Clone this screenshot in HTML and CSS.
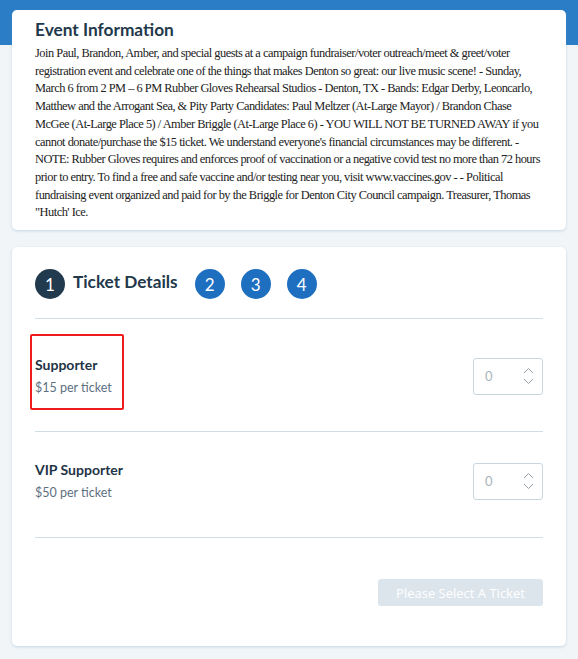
FILE: index.html
```html
<!DOCTYPE html>
<html>
<head>
<meta charset="utf-8">
<link rel="stylesheet" href="styles.css">
</head>
<body>
<div class="page">
  <section class="card info-card">
    <h2 class="card-title">Event Information</h2>
    <p class="desc">Join Paul, Brandon, Amber, and special guests at a campaign fundraiser/voter outreach/meet &amp; greet/voter registration event and celebrate one of the things that makes Denton so great: our live music scene! - Sunday, March 6 from 2 PM – 6 PM Rubber Gloves Rehearsal Studios - Denton, TX - Bands: Edgar Derby, Leoncarlo, Matthew and the Arrogant Sea, &amp; Pity Party Candidates: Paul Meltzer (At-Large Mayor) / Brandon Chase McGee (At-Large Place 5) / Amber Briggle (At-Large Place 6) - YOU WILL NOT BE TURNED AWAY if you cannot donate/purchase the $15 ticket. We understand everyone's financial circumstances may be different. - NOTE: Rubber Gloves requires and enforces proof of vaccination or a negative covid test no more than 72 hours prior to entry. To find a free and safe vaccine and/or testing near you, visit www.vaccines.gov - - Political fundraising event organized and paid for by the Briggle for Denton City Council campaign. Treasurer, Thomas "Hutch' Ice.</p>
  </section>

  <section class="card ticket-card">
    <div class="steps">
      <span class="step step-active">1</span>
      <span class="step-label">Ticket Details</span>
      <span class="step">2</span>
      <span class="step">3</span>
      <span class="step">4</span>
    </div>

    <div class="ticket-row first">
      <div class="ticket-info">
        <div class="ticket-name">Supporter</div>
        <div class="ticket-price">$15 per ticket</div>
        <span class="highlight"></span>
      </div>
      <div class="qty">
        <span class="qty-value">0</span>
        <span class="spin">
          <svg width="11" height="7" viewBox="0 0 11 7"><path d="M1 6 L5.5 1.5 L10 6" fill="none" stroke="#8a98a3" stroke-width="0.9"/></svg>
          <svg width="11" height="7" viewBox="0 0 11 7"><path d="M1 1 L5.5 5.5 L10 1" fill="none" stroke="#8a98a3" stroke-width="0.9"/></svg>
        </span>
      </div>
    </div>

    <div class="ticket-row second">
      <div class="ticket-info">
        <div class="ticket-name">VIP Supporter</div>
        <div class="ticket-price">$50 per ticket</div>
      </div>
      <div class="qty">
        <span class="qty-value">0</span>
        <span class="spin">
          <svg width="11" height="7" viewBox="0 0 11 7"><path d="M1 6 L5.5 1.5 L10 6" fill="none" stroke="#8a98a3" stroke-width="0.9"/></svg>
          <svg width="11" height="7" viewBox="0 0 11 7"><path d="M1 1 L5.5 5.5 L10 1" fill="none" stroke="#8a98a3" stroke-width="0.9"/></svg>
        </span>
      </div>
    </div>

    <div class="actions">
      <button class="btn-disabled">Please Select A Ticket</button>
    </div>
  </section>
</div>
</body>
</html>
```

FILE: styles.css
```css
* { box-sizing: border-box; }

html, body {
  margin: 0;
  padding: 0;
}

body {
  background: linear-gradient(#2b7dc6 0, #2b7dc6 45px, #f1f5f8 45px);
  min-height: 659px;
  font-family: Lato, "Noto Sans", sans-serif;
}

.page {
  padding: 10px 12px 0 12px;
  display: flex;
  flex-direction: column;
  gap: 17px;
}

.card {
  background: #ffffff;
  border-radius: 5px;
  box-shadow: 0 1px 3px rgba(120, 160, 190, 0.35);
  padding: 9px 23px 8px 23px;
}

.card-title {
  margin: 0;
  font-size: 17.3px;
  line-height: 22px;
  font-weight: 700;
  color: #22384b;
}

.desc {
  margin: 4px 0 0 0;
  font-family: "Liberation Serif", "Times New Roman", serif;
  font-size: 12.4px;
  letter-spacing: -0.5px;
  word-spacing: 0;
  line-height: 17.7px;
  color: #222222;
}

.ticket-card {
  padding: 22px 23px 40px 23px;
}

.steps {
  display: flex;
  align-items: center;
  padding-bottom: 19px;
  border-bottom: 1px solid #cfdde4;
}

.step {
  width: 30px;
  height: 30px;
  border-radius: 50%;
  background: #1f6fc1;
  color: #ffffff;
  display: flex;
  align-items: center;
  justify-content: center;
  font-size: 17px;
  margin-right: 16px;
}

.step-active {
  background: #223a4e;
  margin-right: 8px;
}

.step-label {
  font-size: 17.2px;
  font-weight: 700;
  color: #22384b;
  margin-right: 17px;
  margin-top: -5px;
}

.ticket-row {
  display: flex;
  align-items: center;
  justify-content: space-between;
  border-bottom: 1px solid #cfdde4;
}

.ticket-row.first {
  padding: 36px 0 34px 0;
}

.ticket-row.second {
  padding: 28px 0 35px 0;
}

.ticket-info {
  position: relative;
}

.ticket-name {
  font-size: 14px;
  line-height: 20px;
  font-weight: 700;
  color: #1e3446;
}

.ticket-price {
  margin-top: 4px;
  font-size: 12.5px;
  line-height: 18px;
  color: #5d7080;
}

.highlight {
  position: absolute;
  left: -5px;
  top: -21px;
  width: 94px;
  height: 76px;
  border: 2px solid #ee1c1c;
  border-radius: 2px;
}

.qty {
  width: 70px;
  height: 37px;
  border: 1px solid #c8d6de;
  border-radius: 3px;
  display: flex;
  align-items: center;
  justify-content: space-between;
  padding: 0 8px 0 11px;
}

.qty-value {
  font-size: 13px;
  color: #a9b4bc;
}

.spin {
  display: flex;
  flex-direction: column;
  gap: 4px;
}

.spin svg {
  display: block;
}

.actions {
  display: flex;
  justify-content: flex-end;
  margin-top: 41px;
}

.btn-disabled {
  width: 165px;
  height: 27px;
  border: none;
  border-radius: 3px;
  background: #dde5ec;
  color: #ffffff;
  font-family: "Open Sans", sans-serif;
  font-size: 13px;
  padding: 0;
}
```
